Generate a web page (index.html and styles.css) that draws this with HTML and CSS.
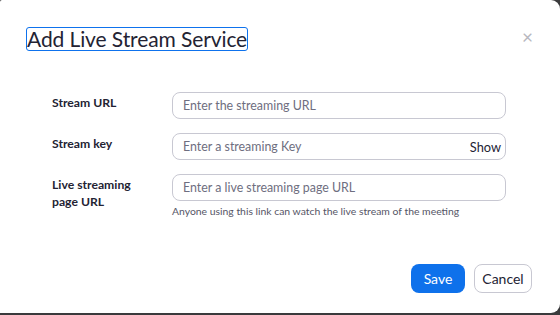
FILE: index.html
```html
<!DOCTYPE html>
<html>
<head>
<meta charset="utf-8">
<link rel="stylesheet" href="styles.css">
</head>
<body>
<div class="dialog">
  <div class="header">
    <h1 class="title">Add Live Stream Service</h1>
    <span class="close">×</span>
  </div>
  <div class="form">
    <div class="row">
      <label class="label">Stream URL</label>
      <div class="field"><div class="input"><span class="ph">Enter the streaming URL</span></div></div>
    </div>
    <div class="row">
      <label class="label">Stream key</label>
      <div class="field"><div class="input"><span class="ph">Enter a streaming Key</span><span class="show">Show</span></div></div>
    </div>
    <div class="row">
      <label class="label">Live streaming<br>page URL</label>
      <div class="field"><div class="input"><span class="ph">Enter a live streaming page URL</span></div>
        <div class="hint">Anyone using this link can watch the live stream of the meeting</div></div>
    </div>
  </div>
  <div class="footer">
    <button class="btn primary">Save</button>
    <button class="btn secondary">Cancel</button>
  </div>
</div>
</body>
</html>
```

FILE: styles.css
```css
html, body { margin: 0; padding: 0; }
body {
  width: 560px; height: 315px; background: #3a3a3c; overflow: hidden;
  font-family: Lato, "Open Sans", sans-serif; color: #232333;
}
.dialog {
  background: #fff; height: 313px; width: 560px; box-sizing: border-box;
  border-radius: 2px 9px 9px 0; display: flex; flex-direction: column;
}
.header { display: flex; align-items: center; justify-content: space-between; padding: 27px 26px 0 26px; }
.title {
  margin: 0; font-size: 21px; font-weight: 400; line-height: 22px; height: 22px;
  border: 1px solid #0e72ed; border-radius: 3px; padding: 0; letter-spacing: -0.1px; color: #232333;
}
.close { color: #b8b8c0; font-size: 19px; line-height: 16px; margin-top: -5px; margin-right: 1px; }
.form { padding: 41px 54px 0 52px; display: flex; flex-direction: column; gap: 14px; }
.row { display: flex; }
.label { width: 120px; font-size: 12.2px; font-weight: 700; line-height: 17px; padding-top: 2px; }
.field { flex: 1; }
.input {
  height: 25px; border: 1px solid #c8c8d2; border-radius: 8px; display: flex; align-items: center;
  justify-content: space-between; padding: 0 4px 0 10px; font-size: 12.4px;
}
.ph { color: #6e6e80; }
.show { color: #232333; font-size: 12.8px; }
.hint { font-size: 10.4px; color: #555566; margin-top: 4px; }
.footer { margin-top: auto; display: flex; justify-content: flex-end; gap: 9px; padding: 0 28px 20px 0; }
.btn {
  font-family: Lato, "Open Sans", sans-serif; font-size: 14px; height: 29px; border-radius: 8px;
  padding: 0; box-sizing: border-box;
}
.primary { background: #0e71eb; color: #fff; border: none; width: 54px; }
.secondary { background: #fff; color: #232333; border: 1px solid #c8c8d2; width: 58px; }
```
